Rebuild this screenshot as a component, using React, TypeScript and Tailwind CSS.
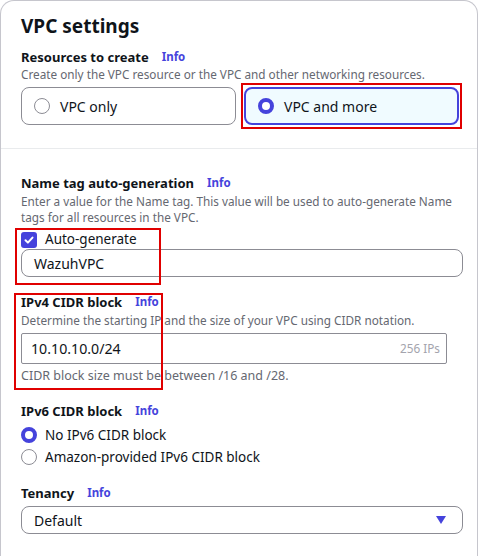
const BLUE = "#4543dc";

function Info() {
  return <span className="ml-[13px] text-[11.5px] font-bold text-[#4543dc]">Info</span>;
}

function Radio({ checked }: { checked: boolean }) {
  return checked ? (
    <span className="box-border block h-4 w-4 flex-shrink-0 rounded-full border-[4.5px] border-[#4543dc] bg-white" />
  ) : (
    <span className="box-border block h-4 w-4 flex-shrink-0 rounded-full border-[1.5px] border-[#8c8c94] bg-white" />
  );
}

function CheckBox() {
  return (
    <span className="flex h-4 w-4 flex-shrink-0 items-center justify-center rounded-[3px] bg-[#4543dc]">
      <svg viewBox="0 0 12 12" fill="none" stroke="white" strokeWidth="2" strokeLinecap="round" strokeLinejoin="round" className="h-3 w-3">
        <path d="M2.5 6.2l2.4 2.4 4.6-5" />
      </svg>
    </span>
  );
}

function RedBox({ className }: { className: string }) {
  return <div className={`pointer-events-none absolute border-2 border-[#e00000] ${className}`} />;
}

function Label({ text, className = "" }: { text: string; className?: string }) {
  return (
    <div className={`flex items-center text-[13px] font-bold leading-[18px] ${className}`}>
      {text}
      <Info />
    </div>
  );
}

export default function App() {
  return (
    <div className="relative h-[556px] w-[485px] overflow-hidden bg-white text-[#0f141a]" style={{ fontFamily: '"Noto Sans", sans-serif' }}>
      <div className="h-[600px] w-[478px] rounded-t-[14px] border border-b-0 border-[#c6c6cd]">
        {/* Resources */}
        <div className="border-b border-[#e9ebed] pb-[23px] pl-5 pr-[14px] pt-[11px]">
          <h2 className="text-[19px] font-bold leading-[29px]">VPC settings</h2>
          <Label text="Resources to create" className="mt-[7px]" />
          <p className="text-[11.75px] leading-[16px] text-[#656871]">
            Create only the VPC resource or the VPC and other networking resources.
          </p>
          <div className="mt-[5px] grid w-[438px] grid-cols-2 gap-2">
            <div className="flex h-[38px] items-center gap-[10px] rounded-lg border border-[#8c8c94] px-3 text-[14px]">
              <Radio checked={false} />
              VPC only
            </div>
            <div className="flex h-[38px] items-center gap-[10px] rounded-lg border-2 border-[#4543dc] bg-[#f0fbff] px-3 text-[14px]">
              <Radio checked />
              VPC and more
            </div>
          </div>
        </div>

        {/* Name tag */}
        <div className="pl-5 pr-[14px] pt-[25px]">
          <Label text="Name tag auto-generation" />
          <p className="mt-px text-[11.75px] leading-[16px] text-[#656871]">
            Enter a value for the Name tag. This value will be used to auto-generate Name tags for all resources in the VPC.
          </p>
          <div className="mt-[6px] flex h-[17px] items-center gap-[8px] text-[13.5px]">
            <CheckBox />
            Auto-generate
          </div>
          <div className="mt-px flex h-[28px] items-center rounded-lg border border-[#8c8c94] px-3 text-[14px]">WazuhVPC</div>

          {/* IPv4 */}
          <Label text="IPv4 CIDR block" className="mt-[16px]" />
          <p className="mt-px text-[11.75px] leading-[16px] text-[#656871]">
            Determine the starting IP and the size of your VPC using CIDR notation.
          </p>
          <div className="mt-[5px] flex h-[31px] w-[426px] items-center justify-between rounded-[2px] border border-[#8c8c94] pl-[9px] pr-[6px]">
            <span className="text-[14.2px]">10.10.10.0/24</span>
            <span className="text-[11.75px] text-[#a4a4ad]">256 IPs</span>
          </div>
          <p className="mt-[4px] text-[12.5px] leading-[16px] text-[#656871]">CIDR block size must be between /16 and /28.</p>

          {/* IPv6 */}
          <Label text="IPv6 CIDR block" className="mt-[18px]" />
          <div className="mt-[4px] flex h-[22px] items-center gap-[8px] text-[13.5px]">
            <Radio checked />
            No IPv6 CIDR block
          </div>
          <div className="flex h-[22px] items-center gap-[8px] text-[13.5px]">
            <Radio checked={false} />
            Amazon-provided IPv6 CIDR block
          </div>

          {/* Tenancy */}
          <Label text="Tenancy" className="mt-[16px]" />
          <div className="mt-[4px] flex h-[28px] items-center justify-between rounded-lg border border-[#8c8c94] pl-3 pr-4 text-[14px]">
            Default
            <svg viewBox="0 0 10 8" className="h-[8px] w-[10px]">
              <path d="M0 0h10L5 8z" fill={BLUE} />
            </svg>
          </div>
        </div>
      </div>

      <RedBox className="left-[241px] top-[83px] h-[46px] w-[221px]" />
      <RedBox className="left-[15px] top-[228px] h-[57px] w-[146px]" />
      <RedBox className="left-[14px] top-[293px] h-[97px] w-[149px]" />
    </div>
  );
}
